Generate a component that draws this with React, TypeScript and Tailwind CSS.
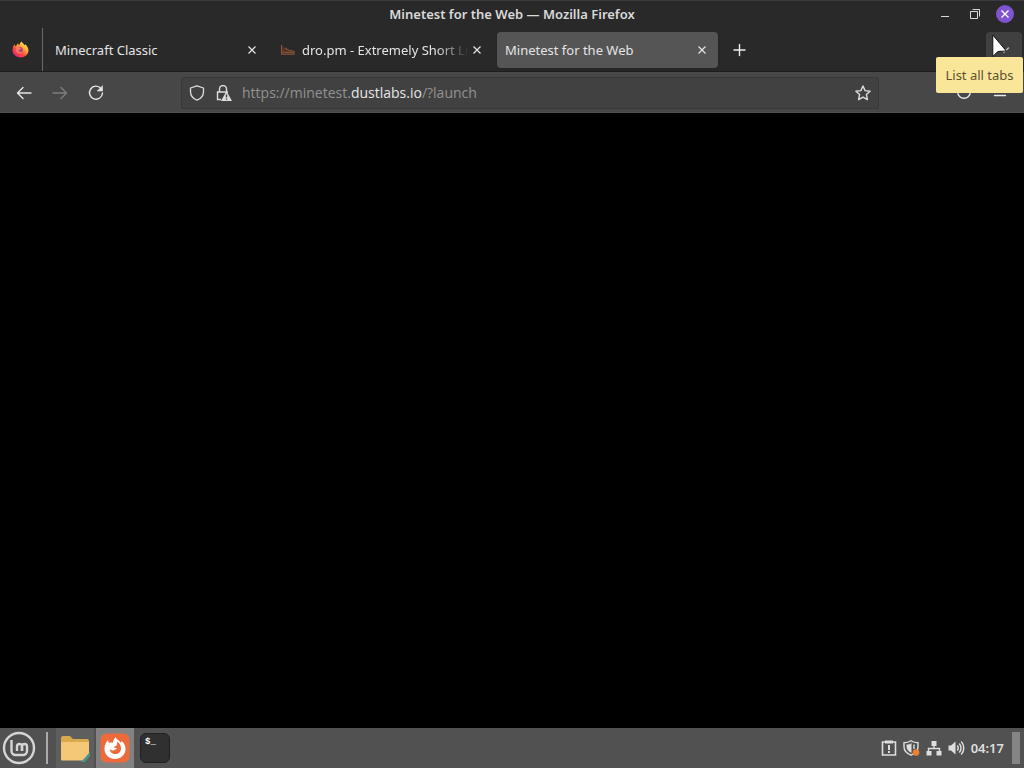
import type { ReactNode } from "react";

function FirefoxLogo() {
  return (
    <svg viewBox="0 0 32 32" className="size-[17px]" aria-hidden="true">
      <defs>
        <linearGradient id="flame" x1="0.85" y1="0.1" x2="0.2" y2="0.95">
          <stop offset="0" stopColor="#fff44f" />
          <stop offset="0.35" stopColor="#ffa13a" />
          <stop offset="0.65" stopColor="#ff4b3f" />
          <stop offset="1" stopColor="#e0287d" />
        </linearGradient>
      </defs>
      <path
        d="M18 1c1 3 4 4 6 7l1-2c3 3 6 7 6 12 0 8-7 13-15 13S1 25 1 17c0-4 1-8 4-11l1 4c2-2 4-3 5-6 1 2 2 3 3 4 0-3 2-5 4-7Z"
        fill="url(#flame)"
      />
      <circle cx="15" cy="17" r="5.5" fill="#b5487f" />
      <path d="M8 11c4-1 5 2 9 2-1 3-4 2-5 5 0 3 5 4 8 2-2 5-11 5-13-2Z" fill="#ff7a5d" />
    </svg>
  );
}

function ShoeIcon() {
  return (
    <svg viewBox="0 0 16 16" className="size-4 shrink-0" aria-hidden="true">
      <path d="M1 3h1.500l.5 2c1 1 2 1 3 .5l3 2.500c2 1 5 .5 6 2v2.500H1Z" fill="#553426" />
      <path d="M1.500 3v9M1 12.200h14M1.500 9.800l4 .6h9M5 6l4 2.500 5.500.8" fill="none" stroke="#85553d" />
    </svg>
  );
}

function CloseIcon() {
  return (
    <svg viewBox="0 0 16 16" className="size-4" fill="none" stroke="currentColor" strokeWidth="1.2" aria-hidden="true">
      <path d="M4.500 4.500l7 7M11.500 4.500l-7 7" />
    </svg>
  );
}

function Tab({ title, active, icon }: { title: string; active?: boolean; icon?: ReactNode }) {
  return (
    <div
      className={
        active
          ? "flex h-9 max-w-[221px] min-w-0 flex-1 items-center rounded bg-[#555555] pr-2 pl-2 text-[#e4e4e4] shadow"
          : "flex h-9 max-w-[221px] min-w-0 flex-1 items-center pr-2 pl-2 text-[#e4e4e4]"
      }
    >
      <button
        role="tab"
        aria-selected={!!active}
        className="flex min-w-0 flex-1 items-center gap-1.5 overflow-hidden text-left"
      >
        {icon}
        <span
          className={
            icon
              ? "min-w-0 flex-1 overflow-hidden mask-r-from-80% whitespace-nowrap"
              : "min-w-0 flex-1 overflow-hidden whitespace-nowrap"
          }
        >
          {title}
        </span>
      </button>
      <button aria-label={`Close ${title}`}>
        <CloseIcon />
      </button>
    </div>
  );
}

function ToolButton({ label, dim, children }: { label: string; dim?: boolean; children: ReactNode }) {
  return (
    <button
      aria-label={label}
      className={
        dim
          ? "flex h-8 w-9 items-center justify-center text-[#7d7d7d]"
          : "flex h-8 w-9 items-center justify-center text-[#e6e6e6]"
      }
    >
      <svg
        viewBox="0 0 16 16"
        className="size-4"
        fill="none"
        stroke="currentColor"
        strokeWidth="1.4"
        strokeLinecap="round"
        strokeLinejoin="round"
        aria-hidden="true"
      >
        {children}
      </svg>
    </button>
  );
}

function TitleBar() {
  return (
    <header className="grid h-7 shrink-0 grid-cols-[1fr_auto_1fr] items-center border-t border-[#3c3c3c] pb-0.5 text-[#dadada]">
      <span />
      <h1 className="text-[13px] leading-5 font-semibold whitespace-nowrap">Minetest for the Web — Mozilla Firefox</h1>
      <div className="flex justify-end pr-1">
        <button aria-label="Minimize" className="flex w-[30px] items-center justify-center">
          <svg viewBox="0 0 16 16" className="size-4" stroke="currentColor" aria-hidden="true">
            <path d="M4 10.500h8" />
          </svg>
        </button>
        <button aria-label="Restore" className="flex w-[30px] items-center justify-center">
          <svg viewBox="0 0 16 16" className="size-4" fill="none" stroke="currentColor" aria-hidden="true">
            <path d="M3.500 5.500h7v7h-7ZM5.500 3.500h7v7" />
          </svg>
        </button>
        <button aria-label="Close window" className="flex w-[30px] items-center justify-center">
          <svg viewBox="0 0 18 18" className="size-[18px]" fill="none" stroke="#ffffff" strokeWidth="1.3" aria-hidden="true">
            <circle cx="9" cy="9" r="9" fill="#7f55cf" stroke="none" />
            <path d="M5.500 5.500l7 7M12.500 5.500l-7 7" />
          </svg>
        </button>
      </div>
    </header>
  );
}

function TabStrip() {
  return (
    <div className="flex h-11 shrink-0 items-center border-b border-[#1d1d1d] pr-0.5 text-[13px] leading-5">
      <button
        aria-label="Firefox View"
        className="flex h-full w-[43px] items-center justify-center border-r border-[#6a6a6a] pr-0.5"
      >
        <FirefoxLogo />
      </button>
      <div role="tablist" className="ml-1 flex min-w-0 flex-1 items-center gap-1">
        <Tab title="Minecraft Classic" />
        <Tab title="dro.pm - Extremely Short Link" icon={<ShoeIcon />} />
        <Tab title="Minetest for the Web" active />
        <button aria-label="New tab" className="flex size-9 items-center justify-center text-[#eeeeee]">
          <svg viewBox="0 0 16 16" className="size-4" stroke="currentColor" strokeWidth="1.4" strokeLinecap="round" aria-hidden="true">
            <path d="M7.500 2.500v11M2 8h11" />
          </svg>
        </button>
      </div>
      <div className="relative">
        <button
          aria-label="List all tabs"
          aria-describedby="all-tabs-tip"
          className="flex size-9 items-center justify-center rounded bg-[#404040] text-[#bbbbbb]"
        >
          <svg viewBox="0 0 16 16" className="size-4" fill="none" stroke="currentColor" strokeWidth="1.4" strokeLinecap="round" aria-hidden="true">
            <path d="M3.500 6l4.500 4 4.500-4" />
          </svg>
        </button>
        <div
          id="all-tabs-tip"
          role="tooltip"
          className="absolute top-[25px] -right-px z-10 flex h-9 w-[87px] items-center justify-center rounded-xs bg-[#fae699] text-[13px] whitespace-nowrap text-[#5d5230]"
        >
          List all tabs
        </div>
        <svg viewBox="0 0 18 24" className="pointer-events-none absolute top-0.5 left-1.5 z-20 h-6 w-[18px]" aria-hidden="true">
          <path d="M.8 1v21.500l5-5 8.500-.5Z" fill="#ffffff" stroke="#111111" />
        </svg>
      </div>
    </div>
  );
}

function NavBar() {
  return (
    <nav className="flex h-[41px] shrink-0 items-center border-b border-[#505050] bg-[#474747] px-1.5 pt-0.5">
      <ToolButton label="Back">
        <path d="M15 8H1.500M7 2.500L1.500 8 7 13.500" />
      </ToolButton>
      <ToolButton label="Forward" dim>
        <path d="M1 8h13.500M9 2.500L14.500 8 9 13.500" />
      </ToolButton>
      <ToolButton label="Reload">
        <path d="M13 3.500A6.500 6.500 0 1 0 14.500 8" />
        <path d="M14.500 1v5h-5Z" fill="currentColor" strokeWidth="0.6" />
      </ToolButton>
      <div className="mx-[67px] flex h-8 min-w-0 flex-1 items-center rounded-xs border border-[#383838] bg-[#414141] px-[7px] text-[#dddddd]">
        <svg viewBox="0 0 16 16" className="size-4 shrink-0" fill="none" stroke="currentColor" strokeWidth="1.3" strokeLinejoin="round" aria-hidden="true">
          <path d="M8 .8l6.500 2.200v3.500c0 4-2.500 7.200-6.500 8.700-4-1.500-6.500-4.700-6.500-8.700V3Z" />
        </svg>
        <svg viewBox="0 0 17 16" className="ml-2.5 h-4 w-[17px] shrink-0" fill="none" stroke="currentColor" strokeWidth="1.4" aria-hidden="true">
          <path d="M4.500 7V4a3.500 3.500 0 0 1 7 0v3M6 14.500H2.500V7h10.500" />
          <path d="M11.500 6L17 16H6Z" fill="currentColor" stroke="none" />
          <path d="M11.500 9.500v3M11.500 13.500v1.200" stroke="#414141" />
        </svg>
        <a
          href="https://minetest.dustlabs.io/?launch"
          className="ml-2.5 flex-1 overflow-hidden font-['Open_Sans','Noto_Sans',sans-serif] text-[14px] leading-5 whitespace-nowrap text-[#929292]"
        >
          https://minetest.<span className="text-[#e6e6e6]">dustlabs.io</span>/?launch
        </a>
        <button aria-label="Bookmark this page">
          <svg viewBox="0 0 16 16" className="size-4" fill="none" stroke="currentColor" strokeWidth="1.4" strokeLinejoin="round" aria-hidden="true">
            <path d="M8 1l2.100 4.600 5 .6-3.700 3.400 1 5L8 12.100l-4.400 2.500 1-5L.9 6.200l5-.6Z" />
          </svg>
        </button>
      </div>
      <ToolButton label="Account">
        <circle cx="8" cy="7" r="6.300" />
      </ToolButton>
      <ToolButton label="Application menu">
        <path d="M2.500 2.500h11M2.500 6.500h11M2.500 10.500h11" />
      </ToolButton>
    </nav>
  );
}

function Taskbar() {
  return (
    <footer className="flex h-10 shrink-0 items-center bg-[#515151] text-[#dedede]">
      <button aria-label="Menu" className="ml-0.5 shrink-0">
        <svg viewBox="0 0 34 34" className="size-[34px]" fill="none" stroke="#d5d5d5" aria-hidden="true">
          <circle cx="17" cy="17" r="15" strokeWidth="2.400" />
          <g strokeWidth="2.400">
            <path d="M9.500 9v11a4 4 0 0 0 4 4h7.500a4 4 0 0 0 4-4v-4.500a2.500 2.500 0 0 0-5 0V20" />
            <path d="M20 20v-4.500a2.500 2.500 0 0 0-5 0V20" />
          </g>
        </svg>
      </button>
      <div className="ml-2.5 h-8 w-0.5 bg-[#aaaaaa]" />
      <div className="ml-2 flex h-full gap-0.5">
        <button aria-label="Files" className="flex w-[38px] items-center justify-center bg-[#5e5e5e]">
          <svg viewBox="0 0 30 28" className="h-7 w-[30px]" aria-hidden="true">
            <path d="M1 4a2 2 0 0 1 2-2h7l3 3h14a2 2 0 0 1 2 2v18H1Z" fill="#d9a94d" />
            <path d="M1 8h28v17a1.500 1.500 0 0 1-1.500 1.500h-25A1.500 1.500 0 0 1 1 25Z" fill="#f5c878" />
            <path d="M30 18v10h-9Z" fill="#4c938c" />
            <path d="M30 22v6h-5Z" fill="#5e5e5e" />
          </svg>
        </button>
        <button aria-label="Firefox" className="flex w-[38px] items-center justify-center bg-[#828282]">
          <svg viewBox="0 0 30 30" className="size-[30px]" aria-hidden="true">
            <rect x="0.500" y="0.500" width="29" height="29" rx="6" fill="#ee6a3a" />
            <path
              d="M15.500 4c1 3 4 3 5.500 6l.5-2c3 2 4 5 4 8 0 6-5 10-10.500 10S4.500 22 4.500 16c0-4 1-6 3.500-9l.8 3c1.500-.6 2.700-.6 3.700 0C13 8 14 6 15.500 4Z"
              fill="#ffffff"
            />
            <path d="M17 8.500c3 2 4 4.500 4 7 0 3.500-2.500 5.500-5.800 5.500-3.200 0-5.400-2.200-5.400-5 1.200 1.500 3.200 1.700 4.500 1 1.200-.7 2-1 2.700-1.300-.5-1-1.700-1.200-3-1 .2-1.700 1.700-1.700 2.700-2.500.6-1 .6-2.300.3-3.700Z" fill="#ee6a3a" />
          </svg>
        </button>
        <button aria-label="Terminal" className="flex w-[38px] items-center justify-center">
          <span className="flex size-[30px] rounded-md border border-[#202020] bg-[#303030] pt-0.5 pl-1 font-['Liberation_Mono',monospace] text-[9px] leading-3 font-bold text-white">
            $_
          </span>
        </button>
      </div>
      <div className="ml-auto flex items-center gap-1.5">
        <svg viewBox="0 0 16 16" className="size-4" fill="none" stroke="currentColor" strokeWidth="1.600" aria-hidden="true">
          <path d="M1.500 2h13v13h-13Z" />
          <path d="M4 .5h8v3H4Z" fill="currentColor" stroke="none" />
          <path d="M8 5v5M8 11v2" strokeWidth="2" />
        </svg>
        <svg viewBox="0 0 17 16" className="h-4 w-[17px]" fill="none" stroke="currentColor" strokeWidth="1.400" aria-hidden="true">
          <path d="M8 .8c2 1.400 4.500 2 7 2v4c0 4-3.500 7-7 8.400C4.500 13.800 1 10.800 1 6.800v-4c2.500 0 5-.6 7-2Z" />
          <path d="M8.500 3v10C5.500 11.500 3.500 9.500 3.500 6.500v-2c2 0 3.500-.5 5-1.500Z" fill="currentColor" stroke="none" />
          <path d="M11 4.500v4.500" />
          <circle cx="13" cy="12.500" r="3.300" fill="#f08030" stroke="none" />
        </svg>
        <svg viewBox="0 0 16 16" className="size-4" fill="currentColor" aria-hidden="true">
          <path d="M5.500 1h5v5h-5ZM.5 11H5.500v4.500H.5ZM10.500 11h5v4.500h-5Z" />
          <path d="M8 6v2.500M2.500 11V8.500h11V11" fill="none" stroke="currentColor" strokeWidth="1.400" />
        </svg>
        <svg viewBox="0 0 17 16" className="h-4 w-[17px]" fill="none" stroke="currentColor" strokeWidth="1.500" strokeLinecap="round" aria-hidden="true">
          <path d="M.5 5.500H3L7.500 1.500v13L3 10.500H.5Z" fill="currentColor" stroke="none" />
          <path d="M9.500 6c1 1 1 3 0 4M11.500 4c2 2 2 6 0 8M13.500 2c3 3 3 9 0 12" />
        </svg>
        <time className="text-[13px] leading-5 font-semibold">04:17</time>
        <button aria-label="Show desktop" className="mr-1 ml-0.5 h-8 w-2 bg-[#858585]" />
      </div>
    </footer>
  );
}

export default function App() {
  return (
    <div className="flex h-screen flex-col overflow-hidden bg-[#292929] font-['Noto_Sans','Open_Sans',sans-serif]">
      <TitleBar />
      <TabStrip />
      <NavBar />
      <main className="min-h-0 flex-1 bg-black" />
      <Taskbar />
    </div>
  );
}
